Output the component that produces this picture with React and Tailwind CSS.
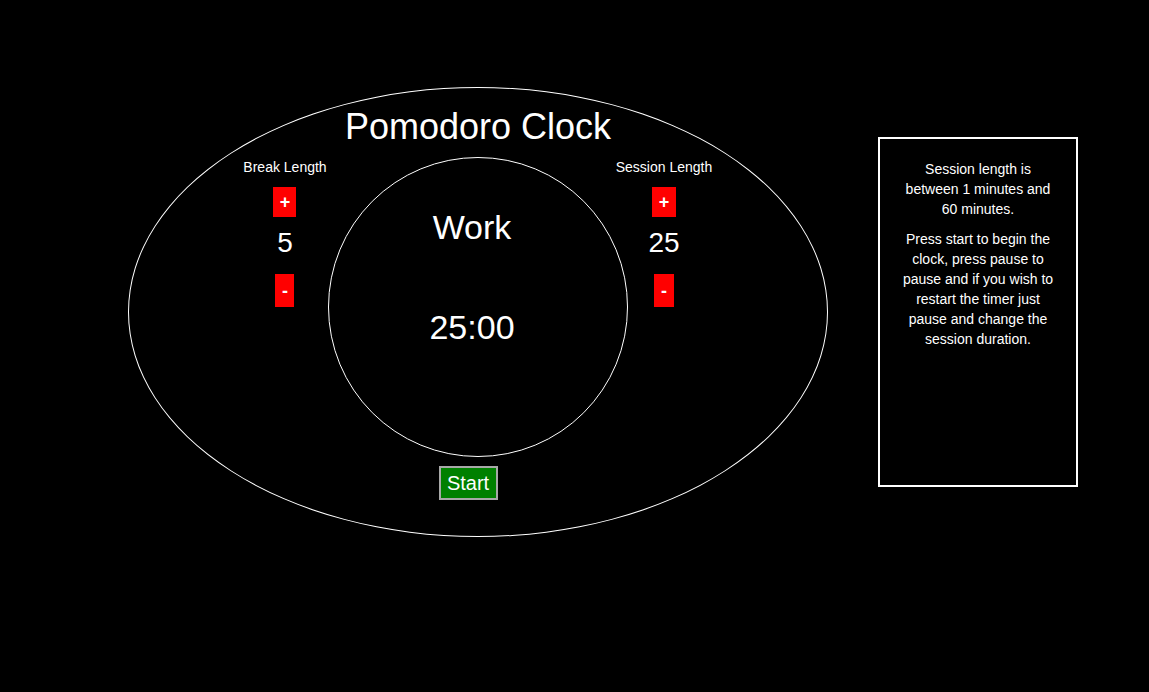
const font = { fontFamily: '"Liberation Sans", Arial, sans-serif' };

function LengthControl({ label, value, plusW, minusW }) {
  return (
    <div className="flex flex-col items-center pt-[2px]">
      <p className="whitespace-nowrap text-[14px] leading-[16px] text-white">{label}</p>
      <button className={`mt-[12px] flex h-[30px] ${plusW} items-center justify-center bg-[#ff0000] text-[18px] font-bold leading-none text-white`}>
        +
      </button>
      <p className="mt-[12px] text-[28px] leading-[28px] text-white">{value}</p>
      <button className={`mt-[17px] flex h-[33px] ${minusW} items-center justify-center bg-[#ff0000] text-[18px] font-bold leading-none text-white`}>
        -
      </button>
    </div>
  );
}

export default function App() {
  return (
    <div className="flex h-[692px] w-full items-start bg-black pl-[128px] pt-[87px]" style={font}>
      {/* Outer ellipse */}
      <div className="flex h-[450px] w-[700px] shrink-0 flex-col rounded-[50%] border border-white pt-[21px]">
        <h1 className="text-center text-[36px] leading-[36px] text-white">Pomodoro Clock</h1>

        <div className="mt-[12px] flex items-start pl-[113px]">
          <div className="flex w-[86px] justify-center">
            <LengthControl label="Break Length" value="5" plusW="w-[23px]" minusW="w-[19px]" />
          </div>

          <div className="flex w-[300px] flex-col items-center">
            <div className="flex h-[300px] w-[300px] flex-col items-center rounded-full border border-white pr-[12px] pt-[52px]">
              <p className="text-[34px] leading-[34px] text-white">Work</p>
              <p className="mt-[66px] text-[34px] leading-[34px] text-white">25:00</p>
            </div>
            <button className="mr-[20px] mt-[9px] flex h-[34px] w-[59px] items-center justify-center border-2 border-[#a8a8a8] bg-[#008000] text-[20px] leading-none text-white">
              Start
            </button>
          </div>

          <div className="flex w-[72px] justify-center">
            <LengthControl label="Session Length" value="25" plusW="w-[24px]" minusW="w-[20px]" />
          </div>
        </div>
      </div>

      {/* Info box */}
      <div className="ml-[50px] mt-[50px] h-[350px] w-[200px] shrink-0 border-2 border-white px-[20px] pt-[20px] text-center text-[14px] leading-[20px] text-white">
        <p>Session length is between 1 minutes and 60 minutes.</p>
        <p className="mt-[10px]">
          Press start to begin the clock, press pause to pause and if you wish to restart the timer just pause and change the session duration.
        </p>
      </div>
    </div>
  );
}
